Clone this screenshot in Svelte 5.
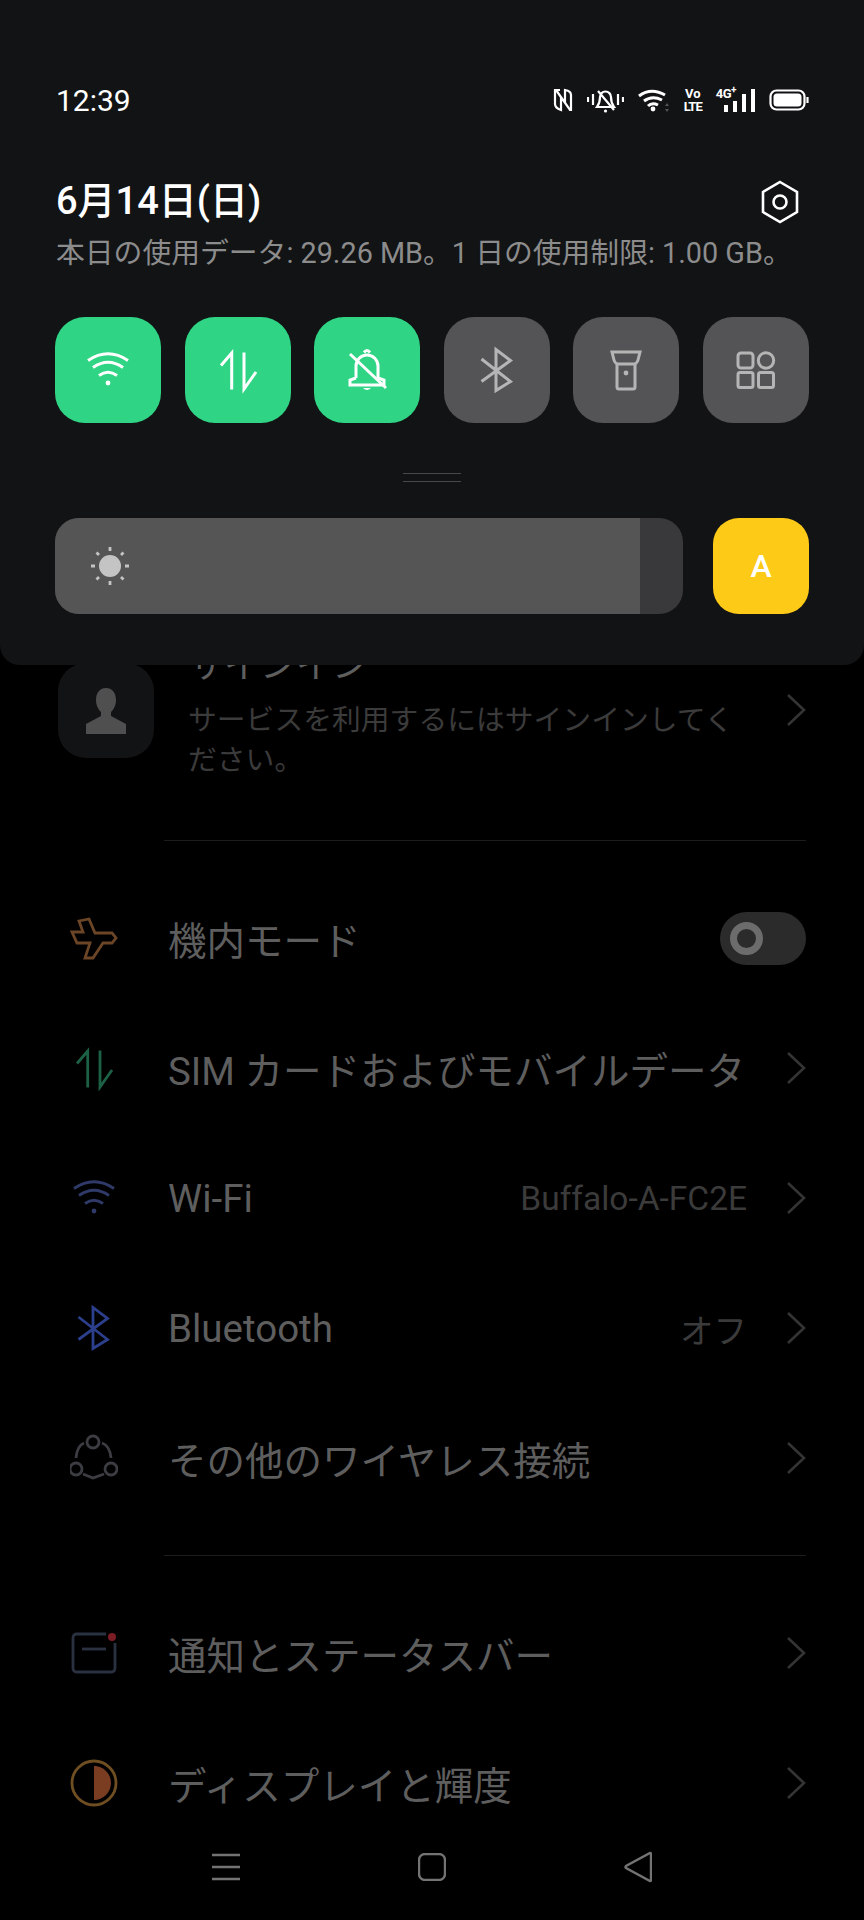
<script lang="ts">
  const tiles = ['wifi', 'data', 'bell', 'bt', 'torch', 'grid'];
  const activeTiles = ['wifi', 'data', 'bell'];

  const groupOne = [
    { key: 'plane', label: '機内モード', toggle: true },
    { key: 'data', label: 'SIM カードおよびモバイルデータ' },
    { key: 'wifi', label: 'Wi-Fi', value: 'Buffalo-A-FC2E' },
    { key: 'bt', label: 'Bluetooth', value: 'オフ' },
    { key: 'link', label: 'その他のワイヤレス接続' }
  ];

  const groupTwo = [
    { key: 'notice', label: '通知とステータスバー' },
    { key: 'display', label: 'ディスプレイと輝度' }
  ];
</script>

{#snippet glyph(key)}
  {#if key === 'wifi'}
    <path d="M4 14.500Q24 1 44 14.500M9 21.500Q24 11 39 21.500M15 29.500Q24 23 33 29.500" />
    <circle cx="24" cy="37" r="2.400" class="solid" />
  {:else if key === 'data'}
    <path d="M7 19.500L17.700 7V43.500M30 6.500V43L42 26" />
  {:else if key === 'bell'}
    <path d="M13 32V20A11 11 0 0 1 35 20V32M21 6.500Q24 2.500 27 6.500M13 32L7 34V39H41V34L35 32" />
    <path d="M7 8L43 42" />
    <path d="M20 42Q24 46 28 42Z" class="solid" />
  {:else if key === 'bt'}
    <path d="M8.500 13L37.500 35.500L23 44.500V3.500L37.500 14.500L8.500 35.500" />
  {:else if key === 'torch'}
    <path d="M10 6H38L36 14Q35 18 31 18H17Q13 18 12 14Z" />
    <path d="M15 18V41Q15 43 17 43H31Q33 43 33 41V18" />
    <circle cx="24" cy="27" r="2.400" class="solid" />
  {:else if key === 'grid'}
    <rect x="6" y="7" width="15" height="15" rx="3" />
    <circle cx="34" cy="14.500" r="7.700" />
    <rect x="6" y="26.500" width="15" height="15" rx="2" />
    <rect x="26.500" y="26.500" width="15" height="15" rx="2" />
  {:else if key === 'plane'}
    <path d="M19 5L25 19H42L46 24L42 29H33L23 44H15L20 29H7L2 18H13L9 7Z" />
  {:else if key === 'link'}
    <circle cx="23" cy="8" r="6" />
    <circle cx="6" cy="35" r="6" />
    <circle cx="41" cy="35" r="6" />
    <path d="M14 9Q7 12 6 24M32 9Q40 12 41 24M13 40L23 44L34 40" />
  {:else if key === 'notice'}
    <path d="M36 5H7Q3 5 3 9V39Q3 43 7 43H41Q45 43 45 39V14" />
    <path d="M12 20H36" />
    <circle cx="42" cy="8" r="5" class="solid dot" />
  {:else if key === 'display'}
    <circle cx="24" cy="24" r="22" />
    <path d="M24 7A17 17 0 0 1 24 41Z" class="solid half" />
  {/if}
{/snippet}

{#snippet chevron()}
  <svg class="chevron" viewBox="0 0 20 34" width="20" height="34"><path d="M2 2L18 17L2 32" /></svg>
{/snippet}

{#snippet row(item)}
  <div class="row">
    <svg class={`row-icon ${item.key}`} viewBox="0 0 48 48" width="48" height="48">
      {@render glyph(item.key)}
    </svg>
    <span class="label">{item.label}</span>
    {#if item.value}
      <span class="value">{item.value}</span>
    {/if}
    {#if item.toggle}
      <div class="toggle"><span class="knob"></span></div>
    {:else}
      {@render chevron()}
    {/if}
  </div>
{/snippet}

<div class="screen">
  <main class="list">
    <section class="account">
      <div class="avatar">
        <svg viewBox="0 0 44 48" width="44" height="48">
          <path d="M22 1C15 1 12 7 12 13C12 19 15 23 17 25V29L2 37V47H42V37L27 29V25C29 23 32 19 32 13C32 7 29 1 22 1Z" />
        </svg>
      </div>
      <div class="account-text">
        <div class="account-title">サインイン</div>
        <div class="account-sub">サービスを利用するにはサインインしてください。</div>
      </div>
      {@render chevron()}
    </section>

    <hr />
    <section class="group">
      {#each groupOne as item}
        {@render row(item)}
      {/each}
    </section>
    <hr />
    <section class="group">
      {#each groupTwo as item}
        {@render row(item)}
      {/each}
    </section>

    <nav class="nav">
      <svg viewBox="0 0 28 28" width="28" height="28"><path d="M0 2H28M0 14H28M0 26H28" /></svg>
      <svg viewBox="0 0 28 28" width="28" height="28"><rect x="1" y="1" width="26" height="26" rx="6" /></svg>
      <svg viewBox="0 0 28 32" width="28" height="32"><path d="M26 2Q27 2 27 3V29Q27 30 26 30L2 17Q1 16 2 15Z" /></svg>
    </nav>
  </main>

  <div class="panel">
    <header class="status">
      <span class="time">12:39</span>
      <div class="status-icons">
        <svg viewBox="0 0 20 24" width="20" height="24" class="st">
          <path d="M7 2H2V16Q2 20 8 22V9M3 2L17 22H18V7Q18 3 12 2V15" />
        </svg>
        <svg viewBox="0 0 37 26" width="37" height="26" class="st">
          <path d="M1 10V15M6 7V18M31 7V18M36 10V15" />
          <path d="M10 20Q13 16 13 10A5.500 5.500 0 0 1 24 10Q24 16 27 20ZM11 4L27 23" />
          <circle cx="18.500" cy="24" r="1.600" class="fill" />
        </svg>
        <svg viewBox="0 0 32 24" width="32" height="24" class="st thick">
          <path d="M1 8Q13 -1 27 7M6 13Q14 7 24 12M10 18Q14 14 20 17" />
          <circle cx="15" cy="21" r="2.400" class="fill" />
          <path d="M29 15L27 18H31ZM29 24L27 21H31Z" class="fill faint" />
        </svg>
        <div class="volte"><span>Vo</span><span class="lte">LTE</span></div>
        <div class="signal">
          <span class="net">4G<sup>+</sup></span>
          <div class="bars">
            <i style="height: 7px"></i>
            <i style="height: 11px"></i>
            <i style="height: 18px"></i>
            <i style="height: 23px"></i>
          </div>
        </div>
        <svg viewBox="0 0 40 22" width="40" height="22" class="st">
          <rect x="1.500" y="1.500" width="34" height="19" rx="6" />
          <rect x="4.500" y="4.500" width="28" height="13" rx="3.500" class="fill" />
          <path d="M38.500 8V14" />
        </svg>
      </div>
    </header>

    <div class="date-row">
      <span class="date">6月14日(日)</span>
      <svg viewBox="0 0 40 44" width="40" height="44" class="gear">
        <path d="M20 2L37 12V32L20 42L3 32V12Z" />
        <circle cx="20" cy="22" r="6.500" />
      </svg>
    </div>
    <p class="usage">本日の使用データ: 29.26 MB。1 日の使用制限: 1.00 GB。</p>

    <div class="tiles">
      {#each tiles as key}
        <div class="tile" class:on={activeTiles.includes(key)}>
          <svg viewBox="0 0 48 48" width="48" height="48">{@render glyph(key)}</svg>
        </div>
      {/each}
    </div>

    <div class="handle"></div>

    <div class="brightness">
      <div class="track">
        <div class="fill-bar">
          <svg viewBox="0 0 40 40" width="40" height="40" class="sun">
            <circle cx="20" cy="20" r="11" />
            <path d="M20 1V5M20 35V39M1 20H5M35 20H39M6.500 6.500L9 9M31 31L33.500 33.500M6.500 33.500L9 31M31 9L33.500 6.500" />
          </svg>
        </div>
      </div>
      <div class="auto">A</div>
    </div>
  </div>
</div>

<style>
  :global(body) {
    background: #000;
  }

  .screen {
    position: relative;
    width: 864px;
    height: 1920px;
    overflow: hidden;
    background: #000;
    font-family: Roboto, 'Noto Sans CJK JP', sans-serif;
  }

  /* dimmed settings page */
  .list {
    padding-top: 644px;
    color: #5e5e5e;
  }

  .account {
    display: flex;
    align-items: center;
    padding: 0 58px;
  }

  .account > .chevron {
    margin-top: -4px;
  }

  .avatar {
    flex: none;
    align-self: flex-start;
    display: flex;
    align-items: center;
    justify-content: center;
    width: 96px;
    height: 95px;
    margin-top: 19px;
    border-radius: 28px;
    background: #121314;
  }

  .avatar svg {
    fill: #4f4f4f;
  }

  .account-text {
    flex: 1;
    margin-left: 34px;
    margin-right: 50px;
  }

  .account-title {
    font-size: 36px;
    line-height: 44px;
    margin-bottom: 12px;
  }

  .account-sub {
    font-size: 28.800px;
    line-height: 40px;
    color: #3b3b3b;
  }

  hr {
    height: 1px;
    border: 0;
    margin: 60px 58px 32px 164px;
    background: #1c1c1c;
  }

  .group + hr {
    margin-top: 32px;
  }

  .row {
    display: flex;
    align-items: center;
    height: 130px;
    padding: 0 58px 0 70px;
  }

  .row-icon {
    flex: none;
    fill: none;
    stroke-width: 2.800;
    stroke: #444;
  }

  .row-icon .solid,
  .tile .solid {
    stroke: none;
  }

  .row-icon.plane {
    stroke: #6b4526;
  }

  .row-icon.data {
    stroke: #1c6145;
  }

  .row-icon.wifi {
    stroke: #2f3a68;
  }

  .row-icon.wifi .solid {
    fill: #2f3a68;
  }

  .row-icon.bt {
    stroke: #2c3f8c;
  }

  .row-icon.link {
    stroke: #3c3d42;
  }

  .row-icon.notice {
    stroke: #2a3140;
  }

  .row-icon.notice .dot {
    fill: #7c1c24;
    stroke: #000;
    stroke-width: 2;
  }

  .row-icon.display {
    stroke: #6f4e22;
  }

  .row-icon.display .half {
    fill: #7a3d22;
  }

  .label {
    flex: 1;
    margin-left: 50px;
    font-size: 38.500px;
    white-space: nowrap;
  }

  .value {
    margin-right: 39px;
    font-size: 33.500px;
    color: #3b3b3b;
  }

  .chevron {
    flex: none;
    fill: none;
    stroke: #343434;
    stroke-width: 2.600;
  }

  .toggle {
    display: flex;
    align-items: center;
    width: 86px;
    height: 53px;
    border-radius: 27px;
    background: #2b2b2b;
  }

  .knob {
    width: 19px;
    height: 19px;
    margin-left: 10px;
    border: 7px solid #6c6c6c;
    border-radius: 50%;
  }

  .nav {
    display: flex;
    align-items: center;
    justify-content: center;
    gap: 178px;
    height: 38px;
  }

  .nav svg {
    fill: none;
    stroke: #737373;
    stroke-width: 2.400;
  }

  /* quick settings panel */
  .panel {
    position: absolute;
    top: 0;
    left: 0;
    width: 100%;
    height: 665px;
    box-sizing: border-box;
    padding: 84px 55px 0;
    border-radius: 0 0 20px 20px;
    background: #121315;
  }

  .status {
    display: flex;
    align-items: center;
    justify-content: space-between;
    height: 32px;
    margin-left: 1px;
  }

  .time {
    font-size: 30px;
    color: #fff;
  }

  .status-icons {
    display: flex;
    align-items: center;
    gap: 14px;
  }

  .st {
    fill: none;
    stroke: #fff;
    stroke-width: 2.200;
  }

  .st.thick {
    stroke-width: 3;
  }

  .st .fill {
    fill: #fff;
    stroke: none;
  }

  .st .faint {
    fill: #555;
  }

  .volte {
    display: flex;
    flex-direction: column;
    align-items: center;
    width: 18px;
    font-size: 13px;
    font-weight: 700;
    line-height: 13px;
    color: #fff;
  }

  .lte {
    letter-spacing: -1px;
  }

  .signal {
    display: flex;
    align-items: flex-end;
    gap: 2px;
    height: 24px;
    color: #fff;
  }

  .net {
    align-self: flex-start;
    margin-right: -14px;
    font-size: 13px;
    font-weight: 700;
    line-height: 12px;
    letter-spacing: -0.500px;
  }

  .net sup {
    font-size: 10px;
    line-height: 0;
  }

  .bars {
    display: flex;
    align-items: flex-end;
    gap: 5px;
  }

  .bars i {
    width: 4px;
    background: #fff;
  }

  .date-row {
    display: flex;
    align-items: flex-start;
    justify-content: space-between;
    height: 44px;
    margin: 60px 0 0 1px;
    padding-right: 9px;
  }

  .date {
    margin-top: 3px;
    font-size: 38px;
    line-height: 44px;
    font-weight: 500;
    color: #fff;
  }

  .gear {
    margin-top: 4px;
    fill: none;
    stroke: #fff;
    stroke-width: 2.600;
  }

  .usage {
    margin: 13px 0 0 1px;
    font-size: 28.800px;
    line-height: 40px;
    white-space: nowrap;
    color: #8c8c8c;
  }

  .tiles {
    display: flex;
    justify-content: space-between;
    margin-top: 44px;
  }

  .tile {
    display: flex;
    align-items: center;
    justify-content: center;
    width: 106px;
    height: 106px;
    border-radius: 30px;
    background: #545456;
  }

  .tile svg {
    fill: none;
    stroke: #b5b5b5;
    stroke-width: 3;
  }

  .tile .solid {
    fill: #b5b5b5;
  }

  .tile.on {
    background: #2fd584;
  }

  .tile.on svg {
    stroke: #fff;
  }

  .tile.on .solid {
    fill: #fff;
  }

  .handle {
    width: 58px;
    height: 7px;
    margin: 50px auto 0;
    border-top: 1px solid #47484a;
    border-bottom: 1px solid #47484a;
  }

  .brightness {
    display: flex;
    justify-content: space-between;
    margin-top: 36px;
  }

  .track {
    width: 628px;
    height: 96px;
    overflow: hidden;
    border-radius: 24px;
    background: #39393b;
  }

  .fill-bar {
    display: flex;
    align-items: center;
    width: 585px;
    height: 100%;
    padding-left: 35px;
    box-sizing: border-box;
    background: #555556;
  }

  .sun {
    fill: #c4c4c4;
    stroke: #c4c4c4;
    stroke-width: 2.800;
  }

  .sun circle {
    stroke: none;
  }

  .auto {
    display: flex;
    align-items: center;
    justify-content: center;
    width: 96px;
    height: 96px;
    border-radius: 26px;
    background: #fdca17;
    font-size: 32px;
    font-weight: 500;
    color: #fff;
  }
</style>
